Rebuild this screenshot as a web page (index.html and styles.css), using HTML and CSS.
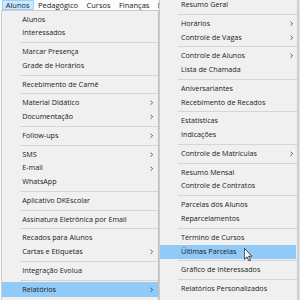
FILE: index.html
```html
<!DOCTYPE html>
<html lang="pt-BR">
<head>
    <meta charset="UTF-8">
    <meta name="viewport" content="width=device-width, initial-scale=1.0">
    <title>Menu Alunos</title>
    <link rel="stylesheet" href="styles.css">
</head>
<body>
    <div class="screen">
        <div class="menubar">
            <span class="bar-item active">Alunos</span>
            <span class="bar-item">Pedagógico</span>
            <span class="bar-item">Cursos</span>
            <span class="bar-item">Finanças</span>
            <span class="bar-item cut">R</span>
        </div>

        <div class="menu main-menu">
            <div class="item">Alunos</div>
            <div class="item">Interessados</div>
            <div class="sep"></div>
            <div class="item">Marcar Presença</div>
            <div class="item">Grade de Horários</div>
            <div class="sep"></div>
            <div class="item">Recebimento de Carnê</div>
            <div class="sep"></div>
            <div class="item has-sub">Material Didático <svg class="arrow" viewBox="0 0 4 6"><polyline points="0.6,0.6 3,3 0.6,5.4"/></svg></div>
            <div class="item has-sub">Documentação <svg class="arrow" viewBox="0 0 4 6"><polyline points="0.6,0.6 3,3 0.6,5.4"/></svg></div>
            <div class="sep"></div>
            <div class="item has-sub">Follow-ups <svg class="arrow" viewBox="0 0 4 6"><polyline points="0.6,0.6 3,3 0.6,5.4"/></svg></div>
            <div class="sep"></div>
            <div class="item has-sub">SMS <svg class="arrow" viewBox="0 0 4 6"><polyline points="0.6,0.6 3,3 0.6,5.4"/></svg></div>
            <div class="item has-sub">E-mail <svg class="arrow" viewBox="0 0 4 6"><polyline points="0.6,0.6 3,3 0.6,5.4"/></svg></div>
            <div class="item">WhatsApp</div>
            <div class="sep"></div>
            <div class="item">Aplicativo DKEscolar</div>
            <div class="sep"></div>
            <div class="item">Assinatura Eletrônica por Email</div>
            <div class="sep"></div>
            <div class="item">Recados para Alunos</div>
            <div class="item has-sub">Cartas e Etiquetas <svg class="arrow" viewBox="0 0 4 6"><polyline points="0.6,0.6 3,3 0.6,5.4"/></svg></div>
            <div class="sep"></div>
            <div class="item">Integração Evolua</div>
            <div class="sep"></div>
            <div class="item has-sub selected">Relatórios <svg class="arrow" viewBox="0 0 4 6"><polyline points="0.6,0.6 3,3 0.6,5.4"/></svg></div>
        </div>

        <div class="menu sub-menu">
            <div class="item">Resumo Geral</div>
            <div class="sep"></div>
            <div class="item has-sub">Horários <svg class="arrow" viewBox="0 0 4 6"><polyline points="0.6,0.6 3,3 0.6,5.4"/></svg></div>
            <div class="item has-sub">Controle de Vagas <svg class="arrow" viewBox="0 0 4 6"><polyline points="0.6,0.6 3,3 0.6,5.4"/></svg></div>
            <div class="sep"></div>
            <div class="item has-sub">Controle de Alunos <svg class="arrow" viewBox="0 0 4 6"><polyline points="0.6,0.6 3,3 0.6,5.4"/></svg></div>
            <div class="item">Lista de Chamada</div>
            <div class="sep"></div>
            <div class="item">Aniversariantes</div>
            <div class="item">Recebimento de Recados</div>
            <div class="sep"></div>
            <div class="item">Estatísticas</div>
            <div class="item">Indicações</div>
            <div class="sep"></div>
            <div class="item has-sub">Controle de Matrículas <svg class="arrow" viewBox="0 0 4 6"><polyline points="0.6,0.6 3,3 0.6,5.4"/></svg></div>
            <div class="sep"></div>
            <div class="item">Resumo Mensal</div>
            <div class="item">Controle de Contratos</div>
            <div class="sep"></div>
            <div class="item">Parcelas dos Alunos</div>
            <div class="item">Reparcelamentos</div>
            <div class="sep"></div>
            <div class="item">Término de Cursos</div>
            <div class="item selected">Últimas Parcelas</div>
            <div class="sep"></div>
            <div class="item">Gráfico de Interessados</div>
            <div class="sep"></div>
            <div class="item">Relatórios Personalizados</div>
        </div>

        <!-- mouse pointer -->
        <svg class="cursor" viewBox="0 0 12 19">
            <path d="M0.5,0.5 L0.5,16 L4.2,12.4 L7,18.3 L9.2,17.3 L6.5,11.6 L11.3,11.6 Z"/>
        </svg>
    </div>
</body>
</html>
```

FILE: styles.css
```css
* {
    box-sizing: border-box;
    margin: 0;
    padding: 0;
}

body {
    background-color: #fafafa;
    font-family: 'Open Sans', 'Noto Sans', sans-serif;
    color: #1a1a1a;
    overflow: hidden;
}

.screen {
    position: relative;
    width: 300px;
    height: 300px;
    overflow: hidden;
}

.menubar {
    display: flex;
    height: 10px;
    padding-left: 1.5px;
    background-color: #fcfcfc;
    font-size: 7.5px;
}

.bar-item {
    height: 9.5px;
    line-height: 8px;
    padding: 0 3.2px;
    border: 1px solid transparent;
    white-space: nowrap;
}

.bar-item.active {
    background-color: #cce8ff;
    border-color: #99d1ff;
}

/* first letter of the next title, the rest sits behind the submenu */
.bar-item.cut {
    padding-right: 0;
}

.menu {
    position: absolute;
    display: flex;
    flex-direction: column;
    background-color: #f0f0f0;
    border: 1px solid #cccccc;
    padding-top: 1.5px;
    font-size: 7.2px;
}

.main-menu {
    left: 1px;
    top: 10px;
    width: 158px;
    height: 300px;
}

.sub-menu {
    left: 159px;
    top: -4.5px;
    width: 139px;
    height: 310px;
    box-shadow: 1px 1px 3px rgba(0, 0, 0, 0.25);
    z-index: 2;
}

.item {
    display: flex;
    align-items: center;
    justify-content: space-between;
    height: 13.9px;
    line-height: 13.9px;
    padding-left: 20.3px;
    padding-right: 5px;
    white-space: nowrap;
}

.sub-menu .item {
    padding-left: 21px;
    padding-right: 2.5px;
    margin-right: 1.5px;
}

.item.selected {
    background-color: #91c9f7;
}

.main-menu .item.selected {
    height: 15px;
    margin-top: -0.5px;
}

.sep {
    height: 1px;
    margin: 1.9px 0 1.9px 18px;
    background-color: #d5d5d5;
}

.arrow {
    width: 3.5px;
    height: 5.5px;
}

.arrow polyline {
    fill: none;
    stroke: #333;
    stroke-width: 0.9;
}

.cursor {
    position: absolute;
    left: 243.5px;
    top: 247.5px;
    width: 8.5px;
    height: 13.5px;
    z-index: 3;
}

.cursor path {
    fill: #fff;
    stroke: #000;
    stroke-width: 1;
    stroke-linejoin: round;
}
```
